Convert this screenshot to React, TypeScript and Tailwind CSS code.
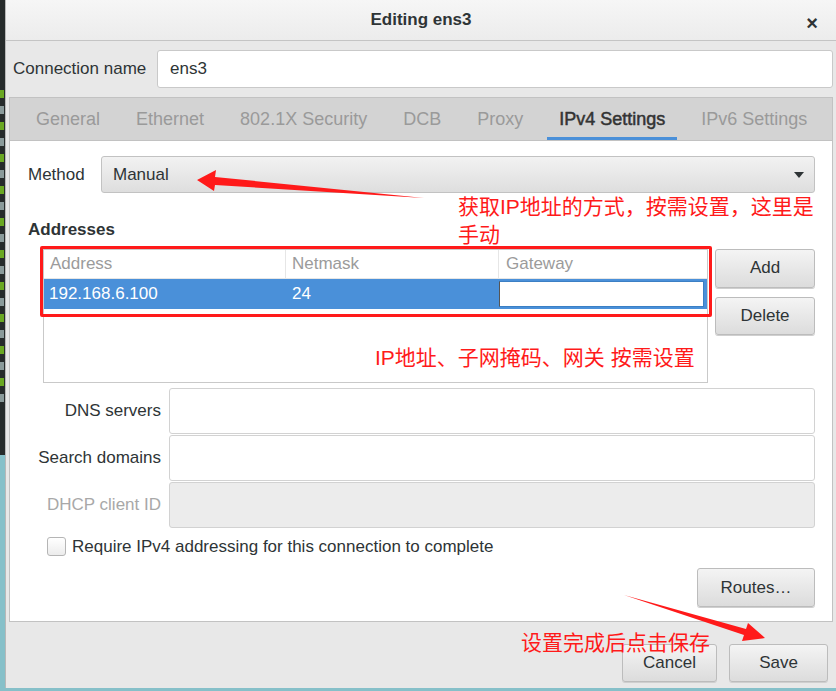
const tabs = ['General', 'Ethernet', '802.1X Security', 'DCB', 'Proxy', 'IPv4 Settings', 'IPv6 Settings'];

function GtkButton({ label, className = '' }: { label: string; className?: string }) {
  return (
    <button
      className={`flex items-center justify-center rounded-[3px] border border-[#bcbcbc] bg-gradient-to-b from-[#f4f4f4] to-[#dcdcdc] text-[17px] text-[#2e3436] shadow-[0_1px_0_#cfcfcf] ${className}`}
    >
      {label}
    </button>
  );
}

function Annotations() {
  return (
    <>
      <svg className="pointer-events-none absolute inset-0" width="836" height="691">
        <polygon points="424,198 215,177 216,170 197,180 214,191 215,185" fill="#ff1a1a" />
        <polygon points="624,595 746,629 748,623 765,638 742,641 744,635" fill="#ff1a1a" />
      </svg>
      <div className="pointer-events-none absolute left-[458px] top-[193px] text-[21px] leading-[28px] text-[#ff1a1a]">
        获取IP地址的方式，按需设置，这里是
        <br />
        手动
      </div>
      <div className="pointer-events-none absolute left-[375px] top-[344px] text-[21px] leading-[28px] text-[#ff1a1a]">
        IP地址、子网掩码、网关 按需设置
      </div>
      <div className="pointer-events-none absolute left-[521px] top-[629px] text-[21px] leading-[28px] text-[#ff1a1a]">
        设置完成后点击保存
      </div>
    </>
  );
}

export default function App() {
  return (
    <div
      className="relative flex h-[691px] w-[836px] overflow-hidden bg-[#86c0c9]"
      style={{ fontFamily: '"Liberation Sans", "Noto Sans CJK SC", sans-serif' }}
    >
      {/* terminal edge behind the dialog */}
      <div className="flex w-[5px] shrink-0 flex-col">
        <div className="flex h-[455px] flex-col gap-[8px] bg-[#262b2b] pt-[90px]">
          {Array.from({ length: 20 }).map((_, i) => (
            <div key={i} className={`h-[8px] w-[4px] ${i % 2 ? 'bg-[#8a9a9a]' : 'bg-[#6aa823]'}`} />
          ))}
        </div>
        <div className="flex-1 bg-[#86c0c9]" />
      </div>

      <div className="flex h-[688px] w-[831px] flex-col border-l border-[#b8b8b8] bg-[#e8e8e8] text-[#2e3436]">
        {/* header bar */}
        <div className="relative flex h-[41px] shrink-0 items-center justify-center border-b border-[#c4c4c4] bg-gradient-to-b from-[#f6f6f6] to-[#ececec]">
          <span className="text-[17px] font-bold text-[#2e3436]">Editing ens3</span>
          <span className="absolute right-[18px] top-[8px] text-[20px] font-bold text-[#2e3436]">×</span>
        </div>

        <div className="flex flex-1 flex-col px-[3px]">
          <div className="mt-[9px] flex items-center">
            <span className="w-[148px] pl-[4px] text-[17px]">Connection name</span>
            <div className="flex h-[38px] flex-1 items-center rounded-[3px] border border-[#c9c9c9] bg-white pl-[12px] text-[17px]">
              ens3
            </div>
          </div>

          {/* notebook */}
          <div className="mt-[9px] flex h-[44px] items-stretch overflow-hidden border border-[#c2c2c2] bg-[#d3d3d3] pl-[8px]">
            {tabs.map((t) => {
              const active = t === 'IPv4 Settings';
              return (
                <div
                  key={t}
                  className={`mx-[6px] flex shrink-0 items-center whitespace-nowrap px-[12px] text-[18px] ${
                    active
                      ? 'border-b-[3px] border-[#4a90d9] pt-[3px] text-[#333] [-webkit-text-stroke:0.5px_#333]'
                      : 'text-[#9a9a9a]'
                  }`}
                >
                  {t}
                </div>
              );
            })}
          </div>

          <div className="flex h-[481px] flex-col border border-t-0 border-[#c2c2c2] bg-white pl-[18px] pr-[17px]">
            <div className="mt-[15px] flex items-center">
              <span className="w-[73px] text-[17px]">Method</span>
              <div className="flex h-[37px] flex-1 items-center justify-between rounded-[3px] border border-[#c2c2c2] bg-gradient-to-b from-[#f2f2f2] to-[#dedede] pl-[11px] pr-[10px] text-[17px]">
                <span>Manual</span>
                <svg width="10" height="6" viewBox="0 0 10 6">
                  <path d="M0 0h10L5 6z" fill="#2e3436" />
                </svg>
              </div>
            </div>

            <div className="mt-[24px] text-[17px] font-bold">Addresses</div>

            <div className="mt-[6px] flex gap-[7px] pl-[15px]">
              <div className="relative h-[134px] flex-1 border border-[#c9c9c9]">
                <div className="flex h-[29px] items-center border-b border-[#e6e6e6] text-[17px] text-[#9b9b9b]">
                  <div className="flex h-full w-[242px] items-center border-r border-[#e6e6e6] pl-[6px]">Address</div>
                  <div className="flex h-full w-[213px] items-center border-r border-[#e6e6e6] pl-[6px]">Netmask</div>
                  <div className="flex h-full flex-1 items-center pl-[7px]">Gateway</div>
                </div>
                <div className="flex h-[30px] items-center bg-[#4a90d9] text-[17px] text-white">
                  <div className="w-[242px] pl-[5px]">192.168.6.100</div>
                  <div className="w-[213px] pl-[6px]">24</div>
                  <div className="flex flex-1 items-center pr-[3px]">
                    <div className="h-[26px] flex-1 border border-[#3b7fc4] border-l-[#555] bg-white" />
                  </div>
                </div>
                {/* annotation frame */}
                <div className="absolute -left-[4px] -right-[5px] -top-[4px] h-[71px] rounded-[2px] border-[3px] border-[#ff1a1a]" />
              </div>
              <div className="flex w-[100px] flex-col gap-[9px]">
                <GtkButton label="Add" className="h-[39px]" />
                <GtkButton label="Delete" className="h-[38px]" />
              </div>
            </div>

            <div className="mt-[5px] grid grid-cols-[133px_1fr] items-center gap-x-[8px] gap-y-[1px]">
              <span className="text-right text-[17px]">DNS servers</span>
              <div className="h-[46px] rounded-[3px] border border-[#d2d2d2] bg-white" />
              <span className="text-right text-[17px]">Search domains</span>
              <div className="h-[46px] rounded-[3px] border border-[#d2d2d2] bg-white" />
              <span className="text-right text-[17px] text-[#a8a8a8]">DHCP client ID</span>
              <div className="h-[46px] rounded-[3px] border border-[#d2d2d2] bg-[#ececec]" />
            </div>

            <label className="mt-[6px] flex items-center gap-[6px] pl-[19px]">
              <span className="h-[19px] w-[19px] rounded-[3px] border border-[#b5b5b5] bg-gradient-to-b from-white to-[#ececec]" />
              <span className="text-[17px]">Require IPv4 addressing for this connection to complete</span>
            </label>

            <div className="mt-[9px] flex justify-end">
              <GtkButton label="Routes…" className="h-[39px] w-[118px]" />
            </div>
          </div>

          <div className="mt-[22px] flex justify-end gap-[12px] pr-[5px]">
            <GtkButton label="Cancel" className="h-[38px] w-[95px]" />
            <GtkButton label="Save" className="h-[38px] w-[99px]" />
          </div>
        </div>
      </div>

      <Annotations />
    </div>
  );
}
